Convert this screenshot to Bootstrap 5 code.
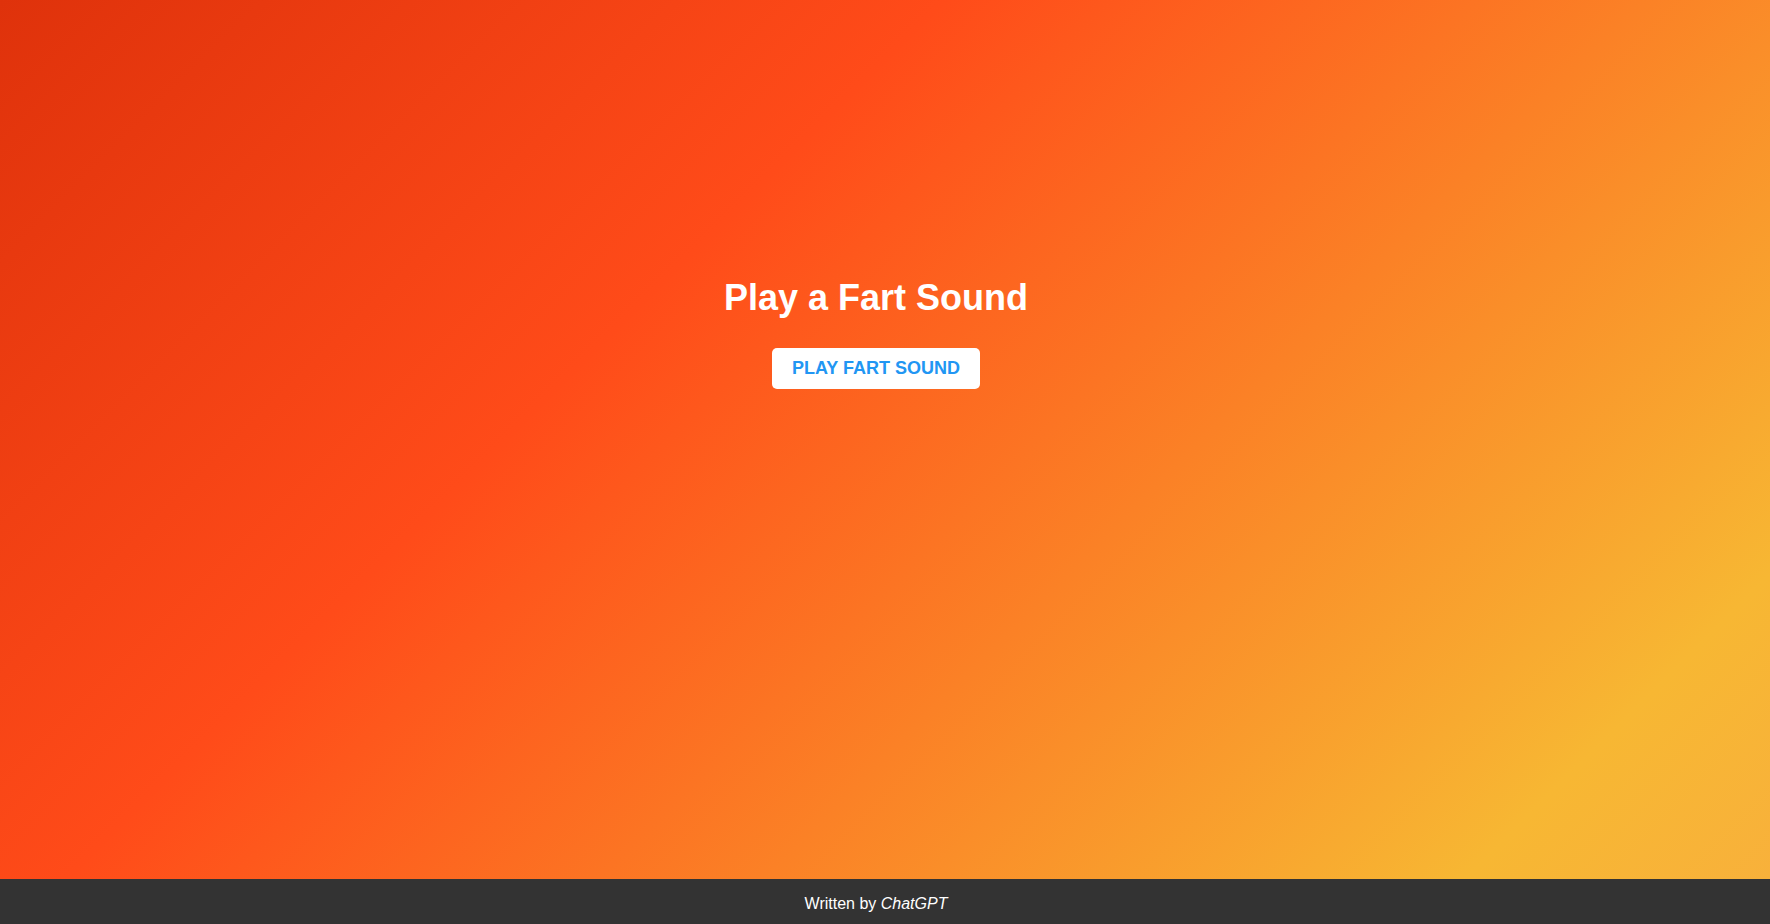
<!DOCTYPE html>
<html lang="en">
<head>
<meta charset="utf-8">
<meta name="viewport" content="width=device-width, initial-scale=1">
<title>Play a Fart Sound</title>
<link rel="stylesheet" href="https://cdn.jsdelivr.net/npm/bootstrap@5.3.0/dist/css/bootstrap.min.css">
<style>
  body {
    font-family: "Liberation Sans", Arial, sans-serif;
    background: linear-gradient(135deg, #df320b 0%, #ff4b19 35%, #f7b733 87%, #f8b03c 100%);
  }
  main { padding: 272px 18px 0 0; }
  h1 { font-size: 36px; line-height: 52px; }
  .btn-play {
    --bs-btn-color: #2196f3;
    --bs-btn-bg: #fff;
    --bs-btn-hover-color: #2196f3;
    --bs-btn-hover-bg: #eee;
    --bs-btn-padding-x: 20px;
    --bs-btn-padding-y: 10px;
    --bs-btn-border-width: 0;
    --bs-btn-border-radius: 5px;
    --bs-btn-font-size: 18px;
    --bs-btn-line-height: 21px;
  }
  footer { background: #333; padding: 16px 18px 11px 0; font-size: 16px; line-height: 18px; }
</style>
</head>
<body class="min-vh-100 d-flex flex-column text-center text-white">
  <main class="flex-grow-1">
    <h1 class="fw-bold mb-4">Play a Fart Sound</h1>
    <button type="button" class="btn btn-play fw-bold text-uppercase">Play Fart Sound</button>
  </main>
  <footer>Written by <em>ChatGPT</em></footer>
  <script src="https://cdn.jsdelivr.net/npm/bootstrap@5.3.0/dist/js/bootstrap.bundle.min.js"></script>
</body>
</html>
